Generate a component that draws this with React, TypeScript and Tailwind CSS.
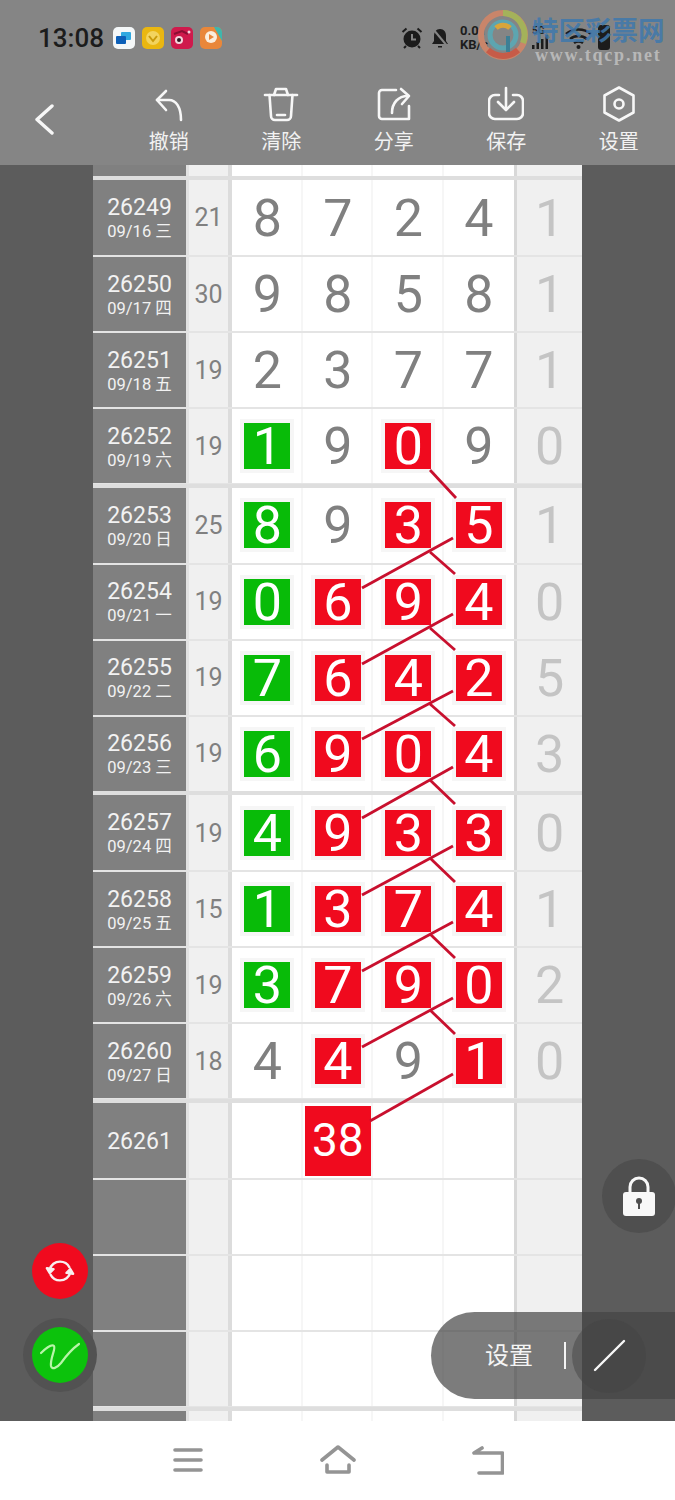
import React from 'react';

type Mark = 'g' | 'r' | '';

interface RowData {
  id: string;
  date?: string;
  sum?: string;
  digits?: [string, Mark][];
  last?: string;
  big?: boolean;
}

const n = (v: string): [string, Mark] => [v, ''];
const g = (v: string): [string, Mark] => [v, 'g'];
const r = (v: string): [string, Mark] => [v, 'r'];

const groups: RowData[][] = [
  [
    { id: '26249', date: '09/16 三', sum: '21', digits: [n('8'), n('7'), n('2'), n('4')], last: '1' },
    { id: '26250', date: '09/17 四', sum: '30', digits: [n('9'), n('8'), n('5'), n('8')], last: '1' },
    { id: '26251', date: '09/18 五', sum: '19', digits: [n('2'), n('3'), n('7'), n('7')], last: '1' },
    { id: '26252', date: '09/19 六', sum: '19', digits: [g('1'), n('9'), r('0'), n('9')], last: '0' },
  ],
  [
    { id: '26253', date: '09/20 日', sum: '25', digits: [g('8'), n('9'), r('3'), r('5')], last: '1' },
    { id: '26254', date: '09/21 一', sum: '19', digits: [g('0'), r('6'), r('9'), r('4')], last: '0' },
    { id: '26255', date: '09/22 二', sum: '19', digits: [g('7'), r('6'), r('4'), r('2')], last: '5' },
    { id: '26256', date: '09/23 三', sum: '19', digits: [g('6'), r('9'), r('0'), r('4')], last: '3' },
  ],
  [
    { id: '26257', date: '09/24 四', sum: '19', digits: [g('4'), r('9'), r('3'), r('3')], last: '0' },
    { id: '26258', date: '09/25 五', sum: '15', digits: [g('1'), r('3'), r('7'), r('4')], last: '1' },
    { id: '26259', date: '09/26 六', sum: '19', digits: [g('3'), r('7'), r('9'), r('0')], last: '2' },
    { id: '26260', date: '09/27 日', sum: '18', digits: [n('4'), r('4'), n('9'), r('1')], last: '0' },
  ],
  [{ id: '26261', big: true }, { id: '' }, { id: '' }, { id: '' }],
];

// connecting lines of the trend chart, page coordinates
const links = [
  [430, 470, 456, 498],
  [453, 538, 362, 588],
  [430, 552, 455, 574],
  [453, 614, 362, 664],
  [430, 628, 455, 650],
  [453, 691, 362, 739],
  [430, 704, 455, 726],
  [453, 767, 362, 818],
  [430, 780, 455, 804],
  [453, 846, 362, 895],
  [430, 858, 455, 882],
  [453, 922, 362, 971],
  [430, 934, 455, 958],
  [453, 998, 362, 1047],
  [430, 1010, 455, 1034],
  [453, 1074, 370, 1121],
];

const Cell: React.FC<{ value?: [string, Mark]; big?: boolean }> = ({ value, big }) => {
  let inner: React.ReactNode = null;
  if (big) {
    inner = (
      <div className="w-[66px] h-[70px] bg-[#f00a1e] text-white text-[46px] font-[450] flex items-center justify-center">38</div>
    );
  } else if (value && value[1]) {
    inner = (
      <div
        className={
          'w-[46px] h-[46px] pt-[2px] ring-4 ring-[#f6f6f6] text-white text-[52px] font-[450] leading-none flex items-center justify-center ' +
          (value[1] === 'g' ? 'bg-[#08bb08]' : 'bg-[#f00a1e]')
        }
      >
        {value[0]}
      </div>
    );
  } else if (value) {
    inner = <span className="pt-[2px] text-[#808080] text-[52px] font-[450] leading-none">{value[0]}</span>;
  }
  return (
    <div className="w-[70.5px] h-full pl-[2px] last:pl-0 flex items-center justify-center border-r-2 border-[#f6f6f6] last:border-r-0">
      {inner}
    </div>
  );
};

const Columns: React.FC<{ className: string; row?: RowData }> = ({ className, row }) => (
  <div className={'flex ' + className}>
    <div className="w-[93px] h-full pt-[2px] bg-[#808080] flex flex-col items-center justify-center text-[#f2f2f2]">
      {row && row.id && <div className="text-[23px] leading-[25px]">{row.id}</div>}
      {row && row.date && <div className="pt-[1px] text-[16.500px] leading-[21px]">{row.date}</div>}
    </div>
    <div className="w-[3px] h-full bg-[#e2e2e2]" />
    <div className="w-[39px] h-full pt-[1px] bg-[#f0f0f0] flex items-center justify-center text-[#808080] text-[25px]">
      {row && row.sum}
    </div>
    <div className="w-[4px] h-full bg-[#dcdcdc]" />
    <div className="w-[282px] h-full bg-white flex">
      {[0, 1, 2, 3].map((i) => (
        <Cell key={i} value={row && row.digits ? row.digits[i] : undefined} big={!!(row && row.big && i === 1)} />
      ))}
    </div>
    <div className="w-[3px] h-full bg-[#d8d8d8]" />
    <div className="w-[65px] h-full pt-[2px] bg-[#f0f0f0] flex items-center justify-center text-[#c4c4c4] text-[52px] font-[450] leading-none">
      {row && row.last}
    </div>
  </div>
);

const Tool: React.FC<{ label: string; children: React.ReactNode }> = ({ label, children }) => (
  <div className="w-[112.5px] flex flex-col items-center">
    <svg viewBox="0 0 36 36" className="w-[36px] h-[36px]" fill="none" stroke="#f7f7f7" strokeWidth="2.6" strokeLinecap="round" strokeLinejoin="round">
      {children}
    </svg>
    <span className="mt-[7px] text-[20px] leading-[27px] text-[#f2f2f2]">{label}</span>
  </div>
);

const StatusBar = () => (
  <div className="h-[75px] flex items-center pl-[38px] relative">
    <span className="text-[26px] font-medium leading-none text-[#1c1c1c] w-[75px]">13:08</span>
    <div className="flex gap-[7px]">
      <svg viewBox="0 0 22 22" className="w-[22px] h-[22px]">
        <rect width="22" height="22" rx="5" fill="#f4f7f8" />
        <rect x="8" y="5" width="10" height="8" rx="1" fill="#2fa8e0" />
        <rect x="3" y="9" width="10" height="8" rx="1" fill="#0c5fb8" />
      </svg>
      <svg viewBox="0 0 22 22" className="w-[22px] h-[22px]">
        <rect width="22" height="22" rx="5" fill="#eab711" />
        <circle cx="11" cy="11" r="7" fill="#f3d45e" />
        <path d="M7 9l4 5 4-5" stroke="#c99a0a" strokeWidth="2" fill="none" />
      </svg>
      <svg viewBox="0 0 22 22" className="w-[22px] h-[22px]">
        <rect width="22" height="22" rx="5" fill="#cf1a4c" />
        <circle cx="8" cy="13" r="4" fill="#f4d6de" />
        <circle cx="8" cy="13" r="2" fill="#2b1a22" />
        <path d="M3 7l8-3 6 3" stroke="#8a0f33" strokeWidth="2" fill="none" />
        <circle cx="18" cy="5" r="1.5" fill="#f4d6de" />
      </svg>
      <svg viewBox="0 0 22 22" className="w-[22px] h-[22px]">
        <rect width="22" height="22" rx="5" fill="#e9873a" />
        <path d="M14 0h3a5 5 0 0 1 5 5v9z" fill="#3fb6ad" />
        <circle cx="11" cy="10" r="6" fill="#fbeedd" />
        <path d="M9 7l5 3-5 3z" fill="#e9873a" />
      </svg>
    </div>
    <div className="ml-auto mr-[65px] flex items-center text-[#1c1c1c]">
      <svg viewBox="0 0 22 22" className="w-[22px] h-[22px]">
        <circle cx="11" cy="12" r="8.5" fill="#1c1c1c" />
        <path d="M11 7v5.5h4" stroke="#858585" strokeWidth="2" fill="none" />
        <path d="M1.5 5l4-3.5M20.500 5l-4-3.5M5 19l-2 2M17 19l2 2" stroke="#1c1c1c" strokeWidth="2" />
      </svg>
      <svg viewBox="0 0 20 22" className="w-[20px] h-[22px] ml-[7px]">
        <path d="M10 2c4 0 6 3 6 7v5l2 3H2l2-3V9c0-4 2-7 6-7z" fill="#1c1c1c" />
        <path d="M8 19h4v1.500H8z" fill="#1c1c1c" />
        <path d="M3 2l15 18" stroke="#858585" strokeWidth="2" />
      </svg>
      <div className="ml-[10px] w-[30px] text-[13px] leading-[14px] font-bold">
        0.01
        <br />
        KB/s
      </div>
      <div className="ml-[42px] w-[16px] flex flex-col">
        <span className="text-[10px] leading-[9px] font-bold">5G</span>
        <svg viewBox="0 0 16 14" className="w-[16px] h-[14px]">
          <path d="M0 10h2.500v4H0zM4.500 7H7v7H4.500zM9 4h2.500v10H9zM13.500 0H16v14h-2.500z" fill="#1c1c1c" />
        </svg>
      </div>
      <svg viewBox="0 0 27 22" className="w-[27px] h-[22px] ml-[17px]">
        <path d="M1 7c7-6 18-6 25 0M5 12c5-4 12-4 17 0M9 16c3-2 6-2 9 0" stroke="#1c1c1c" strokeWidth="2.500" fill="none" />
        <circle cx="13.500" cy="20" r="2" fill="#1c1c1c" />
      </svg>
      <div className="ml-[6px] w-[12px] h-[25px] rounded-[3px] bg-[#1c1c1c]" />
    </div>
    {/* site watermark over the status bar */}
    <svg viewBox="0 0 50 50" className="absolute left-[478px] top-[10px] w-[50px] h-[50px]">
      <circle cx="25" cy="25" r="22" fill="none" stroke="#c9856a" strokeWidth="6" />
      <path d="M25 3a22 22 0 0 1 20 30" fill="none" stroke="#a4b25a" strokeWidth="6" />
      <path d="M10 40a22 22 0 0 0 30 0" fill="none" stroke="#c75b48" strokeWidth="6" />
      <circle cx="25" cy="25" r="13" fill="none" stroke="#5da5b0" strokeWidth="5" />
      <path d="M18 18a10 10 0 0 1 14 0" fill="none" stroke="#d8a53a" strokeWidth="5" />
      <path d="M30 26v16" stroke="#3d7f95" strokeWidth="4" />
    </svg>
    <span className="absolute left-[532px] top-[15px] text-[26.500px] leading-[32px] font-bold text-[#3f78ad]/85 whitespace-nowrap">
      特区彩票网
    </span>
    <span className="absolute left-[535px] top-[45px] text-[18px] leading-[20px] font-bold tracking-[1.800px] text-[#c6c6c6]/80 font-['Liberation_Serif',serif] whitespace-nowrap">
      www.tqcp.net
    </span>
  </div>
);

const Toolbar = () => (
  <div className="h-[90px] flex items-start pt-[11px] relative">
    <div className="w-[112.5px] pl-[34px] pt-[18px]">
      <svg viewBox="0 0 22 32" className="w-[22px] h-[32px]" fill="none" stroke="#f7f7f7" strokeWidth="3.400" strokeLinecap="round" strokeLinejoin="round">
        <path d="M18 2L3 15.500 18 29" />
      </svg>
    </div>
    <Tool label="撤销">
      <path d="M15 5l-9 9 9 10" />
      <path d="M6 14h12c7 0 12 7 12 20" />
    </Tool>
    <Tool label="清除">
      <path d="M2 9h32" />
      <path d="M11 9l2-6h10l2 6" />
      <path d="M6.500 9L8 30a4 4 0 0 0 4 4h12a4 4 0 0 0 4-4l1.500-21" />
      <path d="M14 29h8" />
    </Tool>
    <Tool label="分享">
      <path d="M20 4H6a3 3 0 0 0-3 3v23a3 3 0 0 0 3 3h27V20" />
      <path d="M16 27c0-10 6-17 16-17" />
      <path d="M25 3l8 7-7 8" />
    </Tool>
    <Tool label="保存">
      <path d="M11 9H7a6 6 0 0 0-6 6v12a6 6 0 0 0 6 6h22a6 6 0 0 0 6-6V15a6 6 0 0 0-6-6h-4" />
      <path d="M18 2v21" />
      <path d="M10 16l8 8 8-8" />
    </Tool>
    <Tool label="设置">
      <path d="M18 1.500L32.500 9.500v17L18 34.500 3.500 26.500v-17z" />
      <circle cx="18" cy="18" r="4.500" />
    </Tool>
  </div>
);

const App: React.FC = () => {
  return (
    <div className={'relative w-[675px] h-[1500px] overflow-hidden flex flex-col bg-white font-["Roboto","Noto_Sans_CJK_SC",sans-serif]'}>
      <header className="h-[165px] bg-[#858585]">
        <StatusBar />
        <Toolbar />
      </header>

      <main className="h-[1256px] bg-[#5c5c5c] px-[93px] overflow-hidden">
        <Columns className="h-[11px]" />
        <div className="h-[4px] bg-[#dedede]" />
        {groups.map((rows, gi) => (
          <div key={gi} className="h-[307.700px] flex flex-col bg-[#e4e4e4] border-b-4 border-[#dedede]">
            {rows.map((row, i) => (
              <div key={i} className={(i === 0 ? 'h-[75px] ' : 'h-[74px] ') + (i < 3 ? 'mb-[2px]' : '')}>
                <Columns className="h-full" row={row} />
              </div>
            ))}
          </div>
        ))}
        <Columns className="h-[40px]" />
      </main>

      <nav className="h-[79px] flex items-center justify-center gap-[116px] bg-white pb-[1px]">
        <svg viewBox="0 0 32 32" className="w-[32px] h-[32px]" fill="none" stroke="#949494" strokeWidth="3.600" strokeLinecap="round">
          <path d="M3 6h26M3 16h26M3 26h26" />
        </svg>
        <svg viewBox="0 0 36 32" className="w-[36px] h-[32px]" fill="none" stroke="#949494" strokeWidth="3.600" strokeLinecap="round" strokeLinejoin="round">
          <path d="M2 16L18 3l16 13" />
          <path d="M7 21v7h22v-7" />
        </svg>
        <svg viewBox="0 0 32 32" className="w-[32px] h-[32px]" fill="none" stroke="#949494" strokeWidth="3.600" strokeLinecap="round" strokeLinejoin="round">
          <path d="M10 4L2 9h28.500v20H7" />
        </svg>
      </nav>

      {/* trend lines */}
      <svg viewBox="0 0 675 1500" className="absolute left-0 top-0 w-[675px] h-[1500px] pointer-events-none">
        {links.map((l, i) => (
          <line key={i} x1={l[0]} y1={l[1]} x2={l[2]} y2={l[3]} stroke="#c8102e" strokeWidth="2.800" />
        ))}
      </svg>

      {/* floating buttons */}
      <div className="absolute left-[32px] top-[1243px] w-[56px] h-[56px] rounded-full bg-[#f00a1e] flex items-center justify-center">
        <svg viewBox="0 0 32 32" className="w-[30px] h-[30px]" fill="none" stroke="#f8f0f0" strokeWidth="2.600" strokeLinecap="round" strokeLinejoin="round">
          <path d="M5 15c1-6 6-9 11-9 4 0 8 2 10 6" />
          <path d="M27 17c-1 6-6 9-11 9-4 0-8-2-10-6" />
          <path d="M2 13l3 5 4-4z" fill="#f8f0f0" />
          <path d="M30 19l-3-5-4 4z" fill="#f8f0f0" />
        </svg>
      </div>
      <div className="absolute left-[23px] top-[1318px] w-[74px] h-[74px] rounded-full bg-[#525252] flex items-center justify-center">
        <div className="w-[56px] h-[56px] rounded-full bg-[#0cc20c] flex items-center justify-center">
          <svg viewBox="0 0 48 48" className="w-[48px] h-[48px]" fill="none" stroke="#b8f5a8" strokeWidth="2.200" strokeLinecap="round" strokeLinejoin="round">
            <path d="M5 22c5-5 11-9 13-7 2 3-4 12-3 20 1 4 6 2 10-3 5-7 11-14 18-19" />
          </svg>
        </div>
      </div>
      <div className="absolute left-[602px] top-[1159px] w-[74px] h-[74px] rounded-full bg-[#4f4f4f] flex items-center justify-center">
        <svg viewBox="0 0 34 42" className="w-[34px] h-[42px]">
          <path d="M8 20v-8a9 9 0 0 1 18 0v8" fill="none" stroke="#f8f8f8" strokeWidth="3" />
          <rect x="1" y="17" width="32" height="24" rx="3" fill="#f8f8f8" />
          <circle cx="17" cy="26" r="3" fill="#4f4f4f" />
          <rect x="16" y="26" width="2" height="8" fill="#4f4f4f" />
        </svg>
      </div>
      <div className="absolute left-[431px] top-[1312px] w-[320px] h-[87px] rounded-full bg-[#444444]/70 flex items-center pl-[54px] text-[24px] text-[#f4f4f4]">
        <span>设置</span>
        <span className="ml-[31px] w-[2px] h-[27px] bg-[#f4f4f4]" />
      </div>
      <div className="absolute left-[572px] top-[1319px] w-[74px] h-[74px] rounded-full bg-[#444444]/50 flex items-center justify-center">
        <svg viewBox="0 0 34 34" className="w-[34px] h-[34px]" stroke="#f8f8f8" strokeWidth="2.400" strokeLinecap="round">
          <path d="M3 31L32 2" />
        </svg>
      </div>
    </div>
  );
};

export default App;
